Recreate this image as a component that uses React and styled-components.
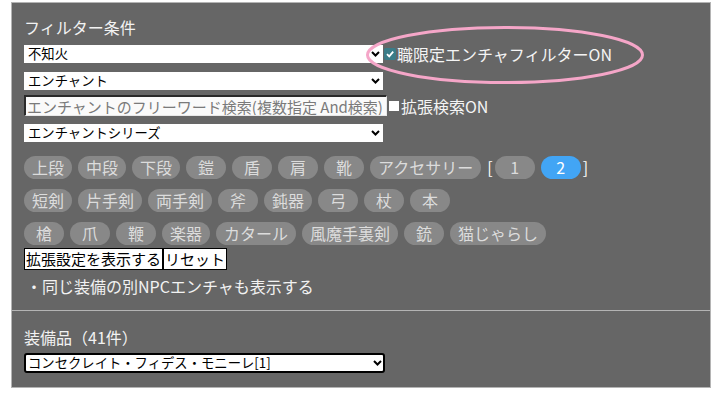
import React from "react";
import styled, { createGlobalStyle } from "styled-components";

const GlobalStyle = createGlobalStyle`
  html, body { margin: 0; padding: 0; background: #fff; }
  body { font-family: "Noto Sans CJK JP", "Noto Sans", sans-serif; }
`;

const Page = styled.div`
  padding: 2px 0 0 11px;
  width: 700px;
`;

const Section = styled.section`
  position: relative;
  display: flow-root;
  background: #666;
  border: 1px solid #b4b4b4;
  border-top-width: ${(p) => (p.$first ? "1px" : "0")};
  padding: 0 12px ${(p) => p.$pb}px;
  color: #f2f2f2;
`;

const Heading = styled.div`
  font-size: 16px;
  line-height: 22px;
  height: 22px;
  margin-top: ${(p) => p.$mt}px;
  white-space: nowrap;
`;

const Row = styled.div`
  display: flex;
  align-items: center;
  margin-top: ${(p) => p.$mt}px;
`;

const SelectWrap = styled.div`
  position: relative;
  width: ${(p) => p.$w}px;
  height: ${(p) => p.$h}px;
  flex: none;
`;

const Select = styled.select`
  appearance: none;
  -webkit-appearance: none;
  display: block;
  box-sizing: border-box;
  width: 100%;
  height: 100%;
  margin: 0;
  padding: 0 16px 0 ${(p) => (p.$boxed ? 2 : 4)}px;
  background: #fff;
  color: #000;
  border: ${(p) => (p.$boxed ? "2px solid #000" : "0")};
  border-radius: ${(p) => (p.$boxed ? "3px" : "0")};
  font-family: "Noto Sans CJK JP", sans-serif;
  font-size: 13.33px;
  line-height: 16px;
  outline: none;
`;

const Chevron = styled.svg`
  position: absolute;
  right: 3px;
  top: 50%;
  margin-top: -3px;
  pointer-events: none;
`;

const TextInput = styled.input`
  box-sizing: border-box;
  width: 363px;
  height: 21px;
  margin: 0;
  padding: 0 1px;
  border-style: solid;
  border-width: 2px 1px 1px 2px;
  border-color: #2a2a2a #e8e8e8 #e8e8e8 #2a2a2a;
  background: #fafafa;
  font-family: "Noto Sans CJK JP", sans-serif;
  font-size: 15px;
  line-height: 17px;
  &::placeholder { color: #7a7a7a; }
`;

const CheckLabel = styled.label`
  display: flex;
  align-items: center;
  font-size: 16px;
  line-height: 18px;
  color: #f4f4f4;
  white-space: nowrap;
  margin-left: ${(p) => p.$ml}px;
`;

const Box = styled.span`
  box-sizing: border-box;
  width: ${(p) => p.$size}px;
  height: ${(p) => p.$size}px;
  margin-right: ${(p) => p.$mr}px;
  background: ${(p) => (p.$checked ? "#3a7c88" : "#fff")};
  border-radius: ${(p) => (p.$checked ? "2px" : "0")};
  display: flex;
  align-items: center;
  justify-content: center;
  flex: none;
`;

const HiddenCheck = styled.input`
  display: none;
`;

const PillRow = styled.div`
  display: flex;
  align-items: center;
  gap: 6px;
  margin-top: ${(p) => p.$mt}px;
`;

const Pill = styled.button`
  box-sizing: border-box;
  height: 23px;
  min-width: 40px;
  padding: 0 8px;
  margin: 0;
  border: 0;
  border-radius: 12px;
  background: ${(p) => (p.$active ? "#42a5f5" : "#888")};
  color: ${(p) => (p.$active ? "#fff" : "#dcdcdc")};
  font-family: "Noto Sans CJK JP", sans-serif;
  font-size: 16px;
  line-height: 23px;
  white-space: nowrap;
  cursor: pointer;
`;

const PageGroup = styled.span`
  display: flex;
  align-items: center;
  gap: 6px;
`;

const Bracket = styled.span`
  font-size: 16px;
  line-height: 23px;
  color: #fff;
  margin: ${(p) => (p.$open ? "0 -4px 0 0" : "0 0 0 -4px")};
`;

const ButtonRow = styled.div`
  display: flex;
  margin-top: 3px;
`;

const PlainButton = styled.button`
  box-sizing: border-box;
  height: 22px;
  margin: 0;
  padding: 0 1px;
  border: 1px solid #000;
  background: #fff;
  color: #000;
  font-family: "Noto Sans CJK JP", sans-serif;
  font-size: 15px;
  line-height: 20px;
  white-space: nowrap;
`;

const Note = styled.div`
  margin-top: 6px;
  font-size: 16px;
  line-height: 20px;
  padding-left: 2px;
  color: #f2f2f2;
  white-space: nowrap;
`;

const Highlight = styled.svg`
  position: absolute;
  left: 353px;
  top: 22px;
  pointer-events: none;
`;

const ChevronIcon = () => (
  <Chevron width="9" height="6" viewBox="0 0 9 6">
    <polyline points="1,1 4.5,4.5 8,1" fill="none" stroke="#000" strokeWidth="2" />
  </Chevron>
);

const Dropdown = ({ value, width = 359, height = 18, boxed }) => (
  <SelectWrap $w={width} $h={height}>
    <Select $boxed={boxed} defaultValue={value}>
      <option value={value}>{value}</option>
    </Select>
    <ChevronIcon />
  </SelectWrap>
);

const rows = [
  ["上段", "中段", "下段", "鎧", "盾", "肩", "靴", "アクセサリー"],
  ["短剣", "片手剣", "両手剣", "斧", "鈍器", "弓", "杖", "本"],
  ["槍", "爪", "鞭", "楽器", "カタール", "風魔手裏剣", "銃", "猫じゃらし"],
];

export default function App() {
  return (
    <>
      <GlobalStyle />
      <Page>
        <Section $first $pb={14}>
          <Heading $mt={13}>フィルター条件</Heading>
          <Row $mt={7}>
            <Dropdown value="不知火" />
            <CheckLabel $ml={1}>
              <HiddenCheck type="checkbox" defaultChecked />
              <Box $size={12} $mr={1} $checked>
                <svg width="10" height="10" viewBox="0 0 10 10">
                  <polyline points="2,5.2 4.2,7.4 8.2,2.6" fill="none" stroke="#fff" strokeWidth="1.8" />
                </svg>
              </Box>
              職限定エンチャフィルターON
            </CheckLabel>
          </Row>
          <Row $mt={9}>
            <Dropdown value="エンチャント" />
          </Row>
          <Row $mt={5}>
            <TextInput placeholder="エンチャントのフリーワード検索(複数指定 And検索)" />
            <CheckLabel $ml={2}>
              <HiddenCheck type="checkbox" />
              <Box $size={10} $mr={2} />
              拡張検索ON
            </CheckLabel>
          </Row>
          <Row $mt={8}>
            <Dropdown value="エンチャントシリーズ" />
          </Row>
          {rows.map((row, i) => (
            <PillRow key={i} $mt={i === 0 ? 14 : 10}>
              {row.map((label) => (
                <Pill key={label}>{label}</Pill>
              ))}
              {i === 0 && (
                <PageGroup>
                  <Bracket $open>[</Bracket>
                  <Pill>1</Pill>
                  <Pill $active>2</Pill>
                  <Bracket>]</Bracket>
                </PageGroup>
              )}
            </PillRow>
          ))}
          <ButtonRow>
            <PlainButton>拡張設定を表示する</PlainButton>
            <PlainButton>リセット</PlainButton>
          </ButtonRow>
          <Note>・同じ装備の別NPCエンチャも表示する</Note>
          <Highlight width="280" height="60" viewBox="0 0 280 60">
            <ellipse cx="140" cy="30" rx="137.5" ry="27.5" fill="none" stroke="#f5a6c8" strokeWidth="3" />
          </Highlight>
        </Section>
        <Section $pb={14}>
          <Heading $mt={15}>装備品（41件）</Heading>
          <Row $mt={5}>
            <Dropdown value="コンセクレイト・フィデス・モニーレ[1]" width={361} height={20} boxed />
          </Row>
        </Section>
      </Page>
    </>
  );
}
